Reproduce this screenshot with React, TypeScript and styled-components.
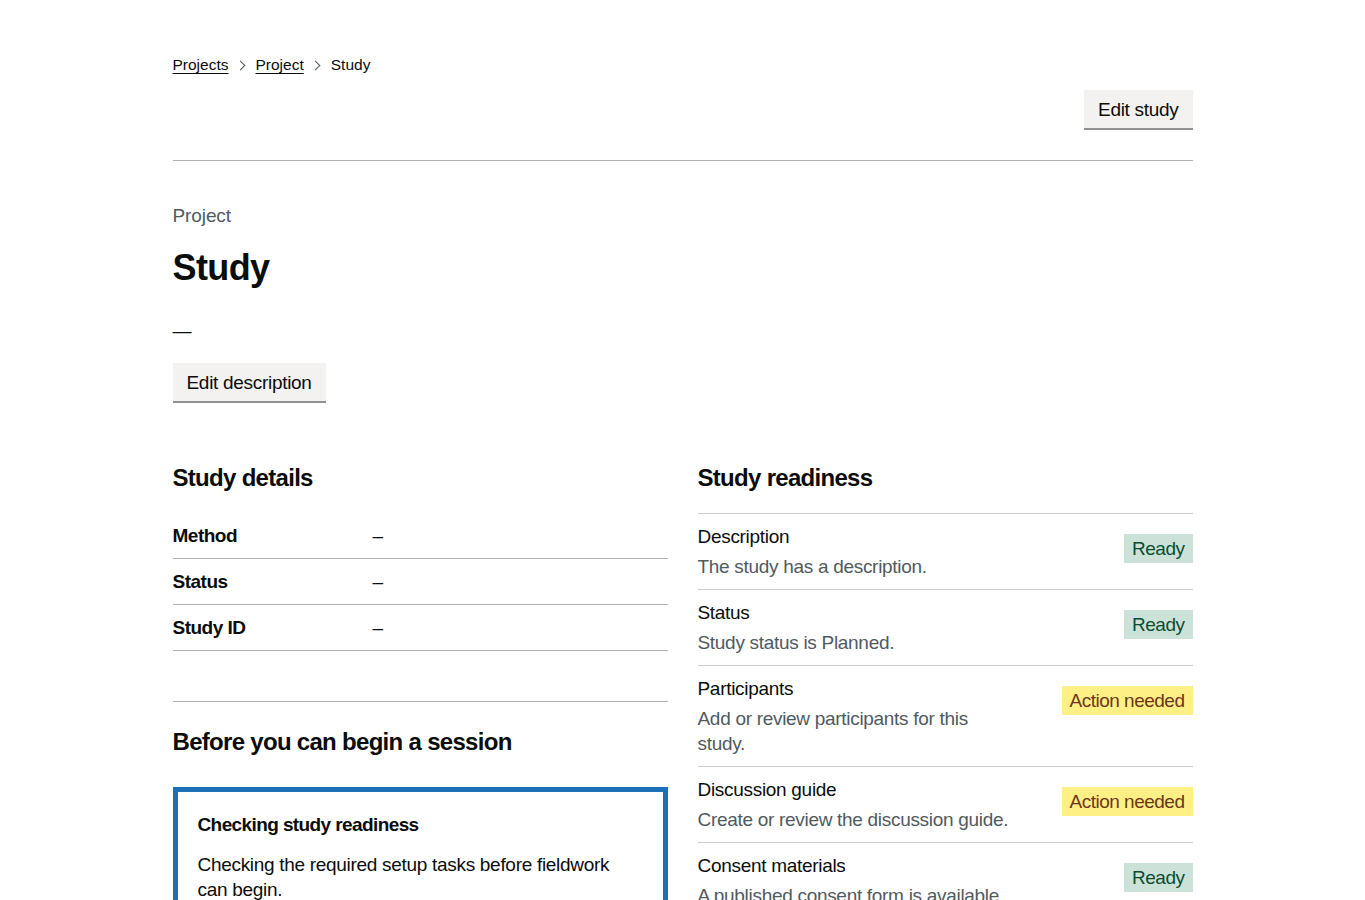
import React from 'react';
import styled, { createGlobalStyle, css } from 'styled-components';

const GlobalStyle = createGlobalStyle`
  body {
    margin: 0;
    background: #ffffff;
    color: #0b0c0c;
    font-family: 'Liberation Sans', Arial, sans-serif;
    letter-spacing: -0.3px;
  }
`;

const Page = styled.div`
  max-width: 1020px;
  margin: 0 auto;
  padding: 55px 0 60px;
`;

const Breadcrumbs = styled.ol`
  display: flex;
  align-items: center;
  list-style: none;
  margin: 0;
  padding: 0;
  font-size: 15.5px;
  line-height: 20px;
  letter-spacing: 0;
`;

const Crumb = styled.li`
  display: flex;
  align-items: center;

  & + &::before {
    content: '';
    display: inline-block;
    width: 6px;
    height: 6px;
    margin: 1px 12px 0 8px;
    border-top: 1px solid #505a5f;
    border-right: 1px solid #505a5f;
    transform: rotate(45deg);
  }
`;

const CrumbLink = styled.a`
  color: #0b0c0c;
  text-decoration: underline;
  text-decoration-thickness: 1px;
  text-underline-offset: 3px;
`;

const Toolbar = styled.div`
  display: flex;
  justify-content: flex-end;
  margin-top: 15px;
`;

const SecondaryButton = styled.button`
  display: inline-block;
  padding: 8px 12px 7px;
  border: 2px solid transparent;
  border-radius: 0;
  background: #f3f2f1;
  box-shadow: 0 2px 0 #929191;
  color: #0b0c0c;
  font-family: inherit;
  font-size: 19px;
  line-height: 19px;
  letter-spacing: -0.3px;
  cursor: pointer;
`;

const Divider = styled.hr<{ $top: number; $bottom: number }>`
  border: 0;
  border-top: 1px solid #b1b4b6;
  margin: ${(p) => p.$top}px 0 ${(p) => p.$bottom}px;
`;

const Caption = styled.span`
  display: block;
  color: #505a5f;
  font-size: 19px;
  line-height: 25px;
  letter-spacing: -0.1px;
  margin-bottom: 20px;
`;

const Title = styled.h1`
  margin: 0 0 30px;
  font-size: 36px;
  line-height: 40px;
  font-weight: 700;
  letter-spacing: -0.6px;
`;

const Placeholder = styled.p`
  margin: 0 0 20px;
  font-size: 19px;
  line-height: 25px;
`;

const Columns = styled.div`
  display: grid;
  grid-template-columns: 1fr 1fr;
  column-gap: 30px;
  margin-top: 62px;
  align-items: start;
`;

const Column = styled.section`
  min-width: 0;
`;

const SectionHeading = styled.h2<{ $spaced?: boolean }>`
  margin: ${(p) => (p.$spaced ? '25px' : '0')} 0 20px;
  font-size: 24px;
  line-height: 30px;
  font-weight: 700;
  letter-spacing: -0.7px;
`;

const SummaryList = styled.dl`
  margin: 0;
  font-size: 19px;
  line-height: 25px;
`;

const SummaryRow = styled.div`
  display: grid;
  grid-template-columns: 200px 1fr;
  padding: 10px 0;
  border-bottom: 1px solid #b1b4b6;
`;

const Key = styled.dt`
  font-weight: 700;
  letter-spacing: -0.5px;
`;

const Value = styled.dd`
  margin: 0;
`;

const Notice = styled.div`
  margin-top: 30px;
  border: 5px solid #1d70b8;
  padding: 20px;
`;

const NoticeTitle = styled.p`
  margin: 0 0 15px;
  font-size: 19px;
  line-height: 25px;
  font-weight: 700;
  letter-spacing: -0.6px;
`;

const NoticeText = styled.p`
  margin: 0;
  font-size: 19px;
  line-height: 25px;
`;

const ReadinessList = styled.ul`
  list-style: none;
  margin: 0;
  padding: 0;
  border-top: 1px solid #cecece;
`;

const ReadinessItem = styled.li`
  display: flex;
  justify-content: space-between;
  align-items: flex-start;
  padding: 10px 0;
  border-bottom: 1px solid #cecece;
`;

const ReadinessText = styled.div`
  max-width: 318px;
  display: flex;
  flex-direction: column;
  gap: 5px;
  font-size: 19px;
  line-height: 25px;
`;

const ItemTitle = styled.span`
  color: #0b0c0c;
`;

const ItemHint = styled.span`
  color: #505a5f;
`;

const tones = {
  green: css`
    background: #cce2d8;
    color: #0b4d2e;
  `,
  yellow: css`
    background: #fff085;
    color: #6e3619;
  `,
};

const Tag = styled.strong<{ $tone: 'green' | 'yellow' }>`
  flex-shrink: 0;
  margin-top: 10px;
  padding: 2px 8px;
  font-size: 19px;
  line-height: 25px;
  font-weight: 400;
  letter-spacing: -0.5px;
  ${(p) => tones[p.$tone]}
`;

const details = [
  { label: 'Method', value: '–' },
  { label: 'Status', value: '–' },
  { label: 'Study ID', value: '–' },
];

const readiness: {
  title: string;
  hint: string;
  status: string;
  tone: 'green' | 'yellow';
}[] = [
  {
    title: 'Description',
    hint: 'The study has a description.',
    status: 'Ready',
    tone: 'green',
  },
  {
    title: 'Status',
    hint: 'Study status is Planned.',
    status: 'Ready',
    tone: 'green',
  },
  {
    title: 'Participants',
    hint: 'Add or review participants for this study.',
    status: 'Action needed',
    tone: 'yellow',
  },
  {
    title: 'Discussion guide',
    hint: 'Create or review the discussion guide.',
    status: 'Action needed',
    tone: 'yellow',
  },
  {
    title: 'Consent materials',
    hint: 'A published consent form is available.',
    status: 'Ready',
    tone: 'green',
  },
  {
    title: 'Sessions',
    hint: 'Schedule at least one session.',
    status: 'Action needed',
    tone: 'yellow',
  },
];

const App = () => {
  return (
    <>
      <GlobalStyle />
      <Page>
        <nav aria-label="Breadcrumb">
          <Breadcrumbs>
            <Crumb>
              <CrumbLink href="#">Projects</CrumbLink>
            </Crumb>
            <Crumb>
              <CrumbLink href="#">Project</CrumbLink>
            </Crumb>
            <Crumb aria-current="page">Study</Crumb>
          </Breadcrumbs>
        </nav>

        <Toolbar>
          <SecondaryButton>Edit study</SecondaryButton>
        </Toolbar>

        <Divider $top={32} $bottom={42} />

        <Caption>Project</Caption>
        <Title>Study</Title>
        <Placeholder>—</Placeholder>
        <SecondaryButton>Edit description</SecondaryButton>

        <Columns>
          <Column>
            <SectionHeading>Study details</SectionHeading>
            <SummaryList>
              {details.map((row) => (
                <SummaryRow key={row.label}>
                  <Key>{row.label}</Key>
                  <Value>{row.value}</Value>
                </SummaryRow>
              ))}
            </SummaryList>

            <Divider $top={50} $bottom={0} />

            <SectionHeading $spaced>Before you can begin a session</SectionHeading>
            <Notice>
              <NoticeTitle>Checking study readiness</NoticeTitle>
              <NoticeText>
                Checking the required setup tasks before fieldwork can begin.
              </NoticeText>
            </Notice>
          </Column>

          <Column>
            <SectionHeading>Study readiness</SectionHeading>
            <ReadinessList>
              {readiness.map((item) => (
                <ReadinessItem key={item.title}>
                  <ReadinessText>
                    <ItemTitle>{item.title}</ItemTitle>
                    <ItemHint>{item.hint}</ItemHint>
                  </ReadinessText>
                  <Tag $tone={item.tone}>{item.status}</Tag>
                </ReadinessItem>
              ))}
            </ReadinessList>
          </Column>
        </Columns>
      </Page>
    </>
  );
};

export default App;
